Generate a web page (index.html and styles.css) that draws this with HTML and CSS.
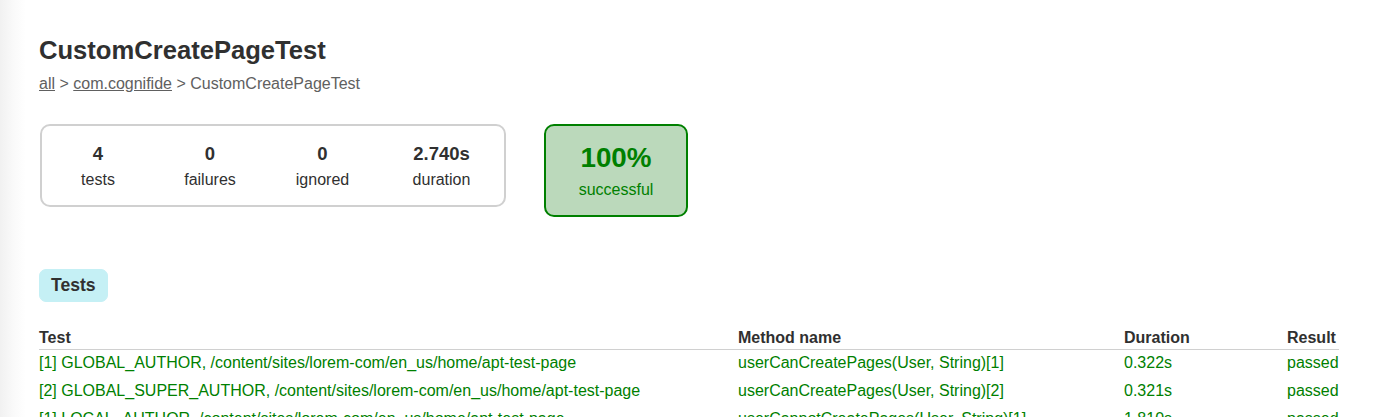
FILE: index.html
```html
<!DOCTYPE html>
<html>
<head>
<meta charset="utf-8">
<title>Test results - CustomCreatePageTest</title>
<link rel="stylesheet" href="styles.css">
</head>
<body>
<div class="content">
  <h1 class="title">CustomCreatePageTest</h1>
  <div class="breadcrumbs"><a href="#">all</a> &gt; <a href="#">com.cognifide</a> &gt; CustomCreatePageTest</div>

  <div class="summary">
    <div class="summary-group">
      <div class="info-box">
        <div class="counter">4</div>
        <p>tests</p>
      </div>
      <div class="info-box">
        <div class="counter">0</div>
        <p>failures</p>
      </div>
      <div class="info-box">
        <div class="counter">0</div>
        <p>ignored</p>
      </div>
      <div class="info-box">
        <div class="counter">2.740s</div>
        <p>duration</p>
      </div>
    </div>
    <div class="success-rate">
      <div class="percent">100%</div>
      <p>successful</p>
    </div>
  </div>

  <ul class="tab-links">
    <li class="tab selected">Tests</li>
  </ul>

  <table class="tests">
    <thead>
      <tr>
        <th class="col-test">Test</th>
        <th class="col-method">Method name</th>
        <th class="col-duration">Duration</th>
        <th class="col-result">Result</th>
      </tr>
    </thead>
    <tbody>
      <tr>
        <td>[1] GLOBAL_AUTHOR, /content/sites/lorem-com/en_us/home/apt-test-page</td>
        <td>userCanCreatePages(User, String)[1]</td>
        <td>0.322s</td>
        <td>passed</td>
      </tr>
      <tr>
        <td>[2] GLOBAL_SUPER_AUTHOR, /content/sites/lorem-com/en_us/home/apt-test-page</td>
        <td>userCanCreatePages(User, String)[2]</td>
        <td>0.321s</td>
        <td>passed</td>
      </tr>
      <tr>
        <td>[1] LOCAL_AUTHOR, /content/sites/lorem-com/en_us/home/apt-test-page</td>
        <td>userCannotCreatePages(User, String)[1]</td>
        <td>1.810s</td>
        <td>passed</td>
      </tr>
      <tr>
        <td>[2] LOCAL_SUPER_AUTHOR, /content/sites/lorem-com/en_us/home/apt-test-page</td>
        <td>userCannotCreatePages(User, String)[2]</td>
        <td>0.287s</td>
        <td>passed</td>
      </tr>
    </tbody>
  </table>
</div>
</body>
</html>
```
FILE: styles.css
```css
html, body {
  margin: 0;
  padding: 0;
}
body {
  font-family: "Liberation Sans", Arial, sans-serif;
  font-size: 16px;
  color: #303030;
  background: linear-gradient(to right, #f1f1f1 0, #fafafa 14px, #ffffff 26px) no-repeat;
  background-color: #fff;
  min-height: 100vh;
}
a, a:visited {
  color: inherit;
}
.content {
  padding: 36px 0 40px 39px;
}
.title {
  margin: 0;
  font-size: 25.6px;
  line-height: 28px;
  font-weight: bold;
  color: #303030;
}
.breadcrumbs {
  margin-top: 11px;
  font-size: 16px;
  line-height: 18px;
  color: #606060;
}
.breadcrumbs a {
  color: #606060;
}
.summary {
  margin-top: 31px;
  display: flex;
  align-items: flex-start;
}
.summary-group {
  display: grid;
  grid-template-columns: 112px 112px 113px 125px;
  border: 2px solid #d0d0d0;
  border-radius: 10px;
  margin-left: 1px;
}
.info-box {
  text-align: center;
  padding: 17px 0 15px;
}
.info-box p, .success-rate p {
  margin: 0;
  line-height: 20px;
}
.counter {
  font-size: 18.5px;
  font-weight: bold;
  line-height: 22px;
  margin-bottom: 5px;
}
.success-rate {
  width: 140px;
  margin-left: 38px;
  border: 2px solid #008000;
  border-radius: 10px;
  background-color: #bbd9bb;
  color: #008000;
  text-align: center;
  padding: 16px 0 15px;
}
.percent {
  font-size: 27.8px;
  font-weight: bold;
  line-height: 32px;
  margin-bottom: 6px;
}
.tab-links {
  list-style: none;
  margin: 52px 0 0;
  padding: 0;
  display: flex;
}
.tab {
  padding: 6px 11px 6px 11px;
  border: 1px solid #d4d4d4;
  border-radius: 7px;
  background-color: #f0f0f0;
  font-size: 17.6px;
  font-weight: bold;
  line-height: 19px;
}
.tab.selected {
  background-color: #c5f0f5;
  border-color: #c5f0f5;
}
.tests {
  margin-top: 27px;
  border-spacing: 0;
  width: 1300px;
  table-layout: fixed;
}
.tests th {
  text-align: left;
  font-weight: bold;
  line-height: 18px;
  padding: 0 0 2px;
  border-bottom: 1px solid #d0d0d0;
  white-space: nowrap;
}
.tests td {
  text-align: left;
  line-height: 18px;
  padding: 4px 0 6px;
  color: #008000;
  white-space: nowrap;
}
.col-test { width: 699px; }
.col-method { width: 386px; }
.col-duration { width: 163px; }
.col-result { width: 52px; }
```
